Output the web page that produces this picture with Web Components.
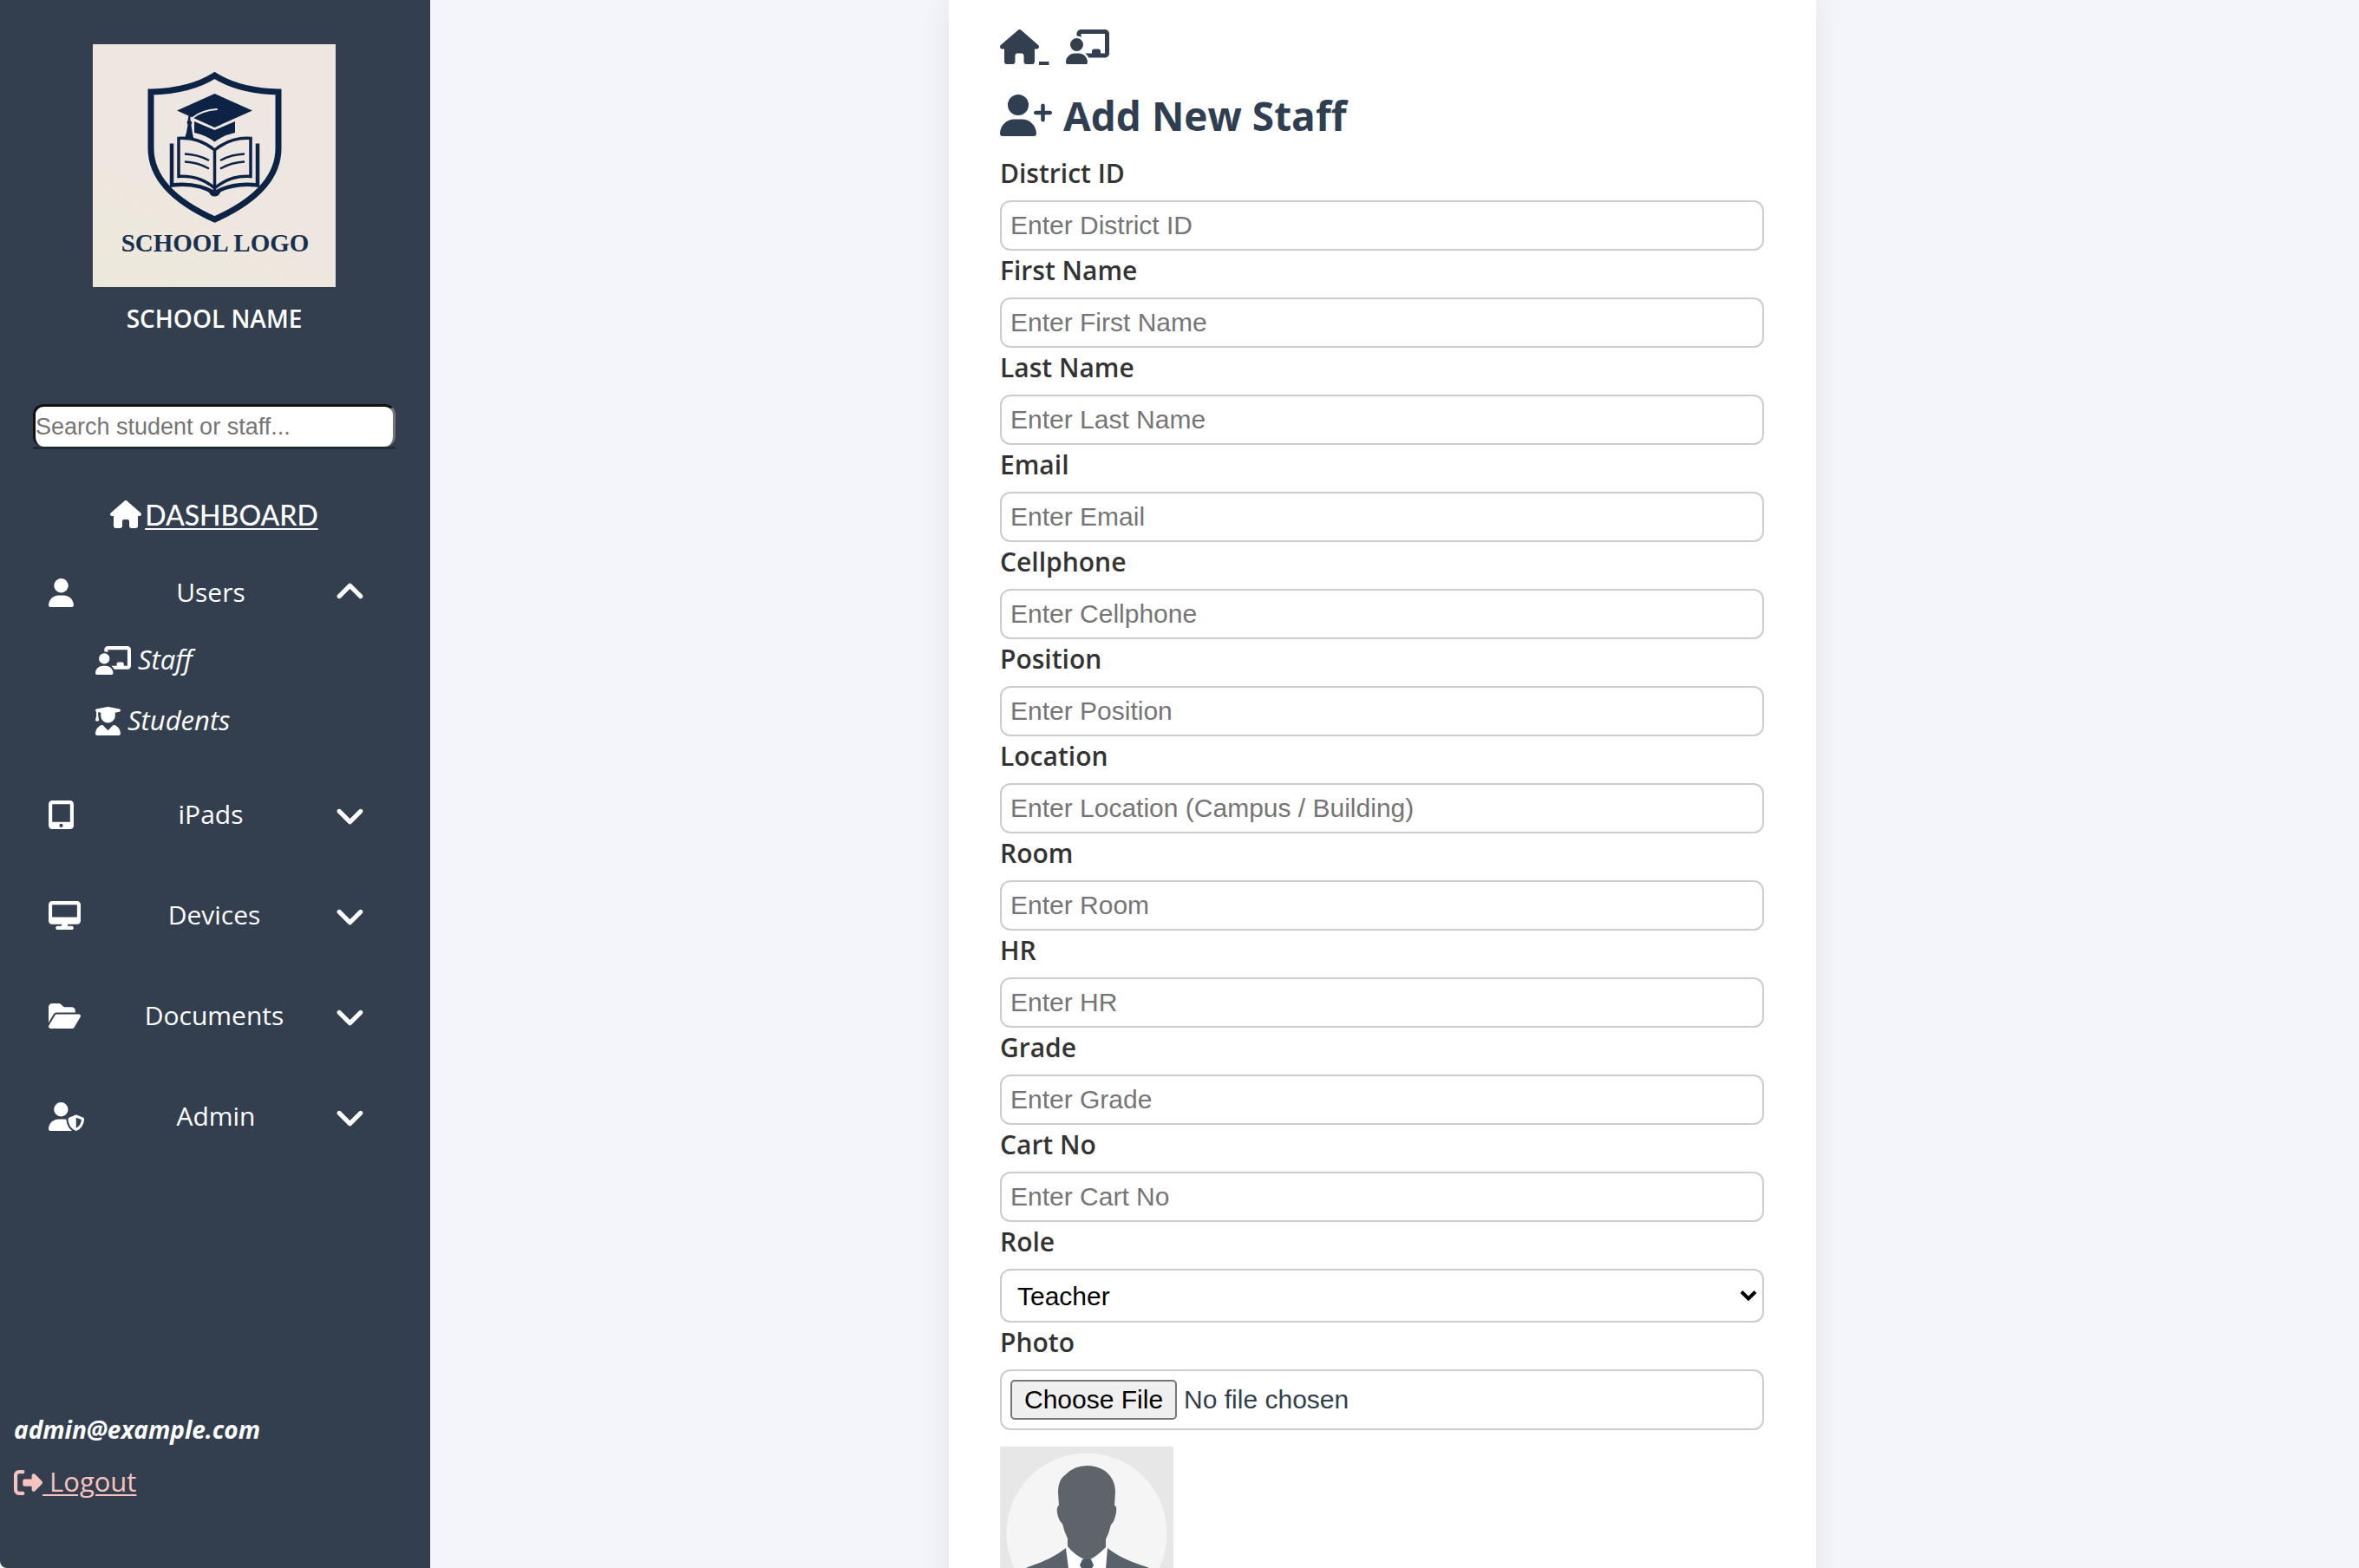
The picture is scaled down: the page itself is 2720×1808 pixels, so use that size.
<!DOCTYPE html>
<html lang="en">
<head>
<meta charset="utf-8">
<title>Add New Staff</title>
<style>
html, body { margin: 0; height: 100%; }
body { background: #f4f5fa; color: #2c3e50; font: 30px/1.4 "Open Sans", "Noto Sans", sans-serif; }
</style>
</head>
<body>
<app-shell>
  <side-bar slot="side">
    <school-brand slot="top" name="SCHOOL NAME"></school-brand>
    <staff-search slot="top"></staff-search>
    <dashboard-link slot="top">DASHBOARD</dashboard-link>
    <nav-group slot="nav" icon="user" label="Users" open>
      <nav-item icon="board">Staff</nav-item>
      <nav-item icon="graduate">Students</nav-item>
    </nav-group>
    <nav-group slot="nav" icon="tablet" label="iPads"></nav-group>
    <nav-group slot="nav" icon="desktop" label="Devices"></nav-group>
    <nav-group slot="nav" icon="folder" label="Documents"></nav-group>
    <nav-group slot="nav" icon="shield" label="Admin"></nav-group>
    <user-account slot="foot" email="admin@example.com"></user-account>
  </side-bar>
  <form-card>
    <bread-crumbs></bread-crumbs>
    <page-title>Add New Staff</page-title>
    <text-field label="District ID"></text-field>
    <text-field label="First Name"></text-field>
    <text-field label="Last Name"></text-field>
    <text-field label="Email" type="email"></text-field>
    <text-field label="Cellphone" type="tel"></text-field>
    <text-field label="Position"></text-field>
    <text-field label="Location" hint="Enter Location (Campus / Building)"></text-field>
    <text-field label="Room"></text-field>
    <text-field label="HR"></text-field>
    <text-field label="Grade"></text-field>
    <text-field label="Cart No"></text-field>
    <role-field label="Role"></role-field>
    <photo-field label="Photo"></photo-field>
  </form-card>
</app-shell>

<script>
const ICONS = {
  house: [576, "M575.8 255.5c0 18-15 32.1-32 32.1h-32l.7 160.2c0 2.7-.2 5.4-.5 8.1V472c0 22.1-17.9 40-40 40H456c-1.1 0-2.2 0-3.3-.1c-1.4 .1-2.8 .1-4.2 .1H416 392c-22.1 0-40-17.9-40-40V448 384c0-17.7-14.3-32-32-32H256c-17.7 0-32 14.3-32 32v64 24c0 22.1-17.9 40-40 40H160 128.1c-1.5 0-3-.1-4.5-.2c-1.2 .1-2.4 .2-3.6 .2H104c-22.1 0-40-17.9-40-40V360c0-.9 0-1.9 .1-2.8V287.6H32c-18 0-32-14-32-32.1c0-9 3-17 10-24L266.4 8c7-7 15-8 22-8s15 2 21 7L564.8 231.5c8 7 12 15 11 24z"],
  user: [448, "M224 256A128 128 0 1 0 224 0a128 128 0 1 0 0 256zm-45.7 48C79.8 304 0 383.8 0 482.3C0 498.7 13.3 512 29.7 512H418.3c16.4 0 29.7-13.3 29.7-29.7C448 383.8 368.2 304 269.7 304H178.3z"],
  board: [640, "M160 64c0-35.3 28.7-64 64-64H576c35.3 0 64 28.7 64 64V352c0 35.3-28.7 64-64 64H336.8c-11.8-25.5-29.9-47.5-52.4-64H384V320c0-17.7 14.3-32 32-32h64c17.7 0 32 14.3 32 32v32h64V64L224 64v49.1C205.2 102.2 183.3 96 160 96V64zm0 64a96 96 0 1 1 0 192 96 96 0 1 1 0-192zM133.3 352h53.3C260.3 352 320 411.7 320 485.3c0 14.7-11.9 26.7-26.7 26.7H26.7C11.9 512 0 500.1 0 485.3C0 411.7 59.7 352 133.3 352z"],
  plus: [640, "M96 128a128 128 0 1 1 256 0A128 128 0 1 1 96 128zM0 482.3C0 383.8 79.8 304 178.3 304h91.4C368.2 304 448 383.8 448 482.3c0 16.4-13.3 29.7-29.7 29.7H29.7C13.3 512 0 498.7 0 482.3zM504 312V248H440c-13.3 0-24-10.7-24-24s10.7-24 24-24h64V136c0-13.3 10.7-24 24-24s24 10.7 24 24v64h64c13.3 0 24 10.7 24 24s-10.7 24-24 24H552v64c0 13.3-10.7 24-24 24s-24-10.7-24-24z"],
  graduate: [448, "M219.3 .5c3.1-.6 6.3-.6 9.4 0l200 40C439.9 42.7 448 52.6 448 64s-8.1 21.3-19.3 23.5L352 102.9V160c0 70.7-57.3 128-128 128s-128-57.3-128-128V102.9L48 93.3v65.1l15.7 78.4c.9 4.7-.3 9.6-3.3 13.3s-7.6 5.9-12.4 5.9H16c-4.8 0-9.3-2.1-12.4-5.9s-4.3-8.6-3.3-13.3L16 158.4V86.6C6.5 83.3 0 74.3 0 64C0 52.6 8.1 42.7 19.3 40.5l200-40zM111.9 327.7c10.5-3.4 21.8 .4 29.4 8.5l71 75.5c6.3 6.7 17 6.7 23.3 0l71-75.5c7.6-8.1 18.9-11.9 29.4-8.5C401 348.6 448 409.4 448 481.3c0 17-13.8 30.7-30.7 30.7H30.7C13.8 512 0 498.2 0 481.3c0-71.9 47-132.7 111.9-153.6z"],
  tablet: [448, "M0 64C0 28.7 28.7 0 64 0H384c35.3 0 64 28.7 64 64V448c0 35.3-28.7 64-64 64H64c-35.3 0-64-28.7-64-64V64zM256 448a32 32 0 1 0 -64 0 32 32 0 1 0 64 0zM384 64H64V384H384V64z"],
  desktop: [576, "M64 0C28.7 0 0 28.7 0 64V352c0 35.3 28.7 64 64 64H240l-10.7 32H160c-17.7 0-32 14.3-32 32s14.3 32 32 32H416c17.7 0 32-14.3 32-32s-14.3-32-32-32H346.7L336 416H512c35.3 0 64-28.7 64-64V64c0-35.3-28.7-64-64-64H64zM512 64V288H64V64H512z"],
  folder: [576, "M88.7 223.8L0 375.8V96C0 60.7 28.7 32 64 32H181.5c17 0 33.3 6.7 45.3 18.7l26.5 26.5c12 12 28.3 18.7 45.3 18.7H416c35.3 0 64 28.7 64 64v32H144c-22.8 0-43.8 12.1-55.3 31.8zm27.6 16.1C122.1 230 132.6 224 144 224H544c11.5 0 22 6.1 27.7 16.1s5.7 22.2-.1 32.1l-112 192C453.9 474 443.4 480 432 480H32c-11.5 0-22-6.1-27.7-16.1s-5.7-22.2 .1-32.1l112-192z"],
  shield: [640, "M224 256A128 128 0 1 0 224 0a128 128 0 1 0 0 256zm-45.7 48C79.8 304 0 383.8 0 482.3C0 498.7 13.3 512 29.7 512H418.3c1.8 0 3.5-.2 5.3-.5c-76.3-55.1-99.8-141-103.1-200.2c-16.1-4.8-33.1-7.3-50.7-7.3H178.3zm308.8-78.3l-120 48C358 277.4 352 286.2 352 296c0 63.3 25.9 168.8 134.8 214.2c5.9 2.5 12.6 2.5 18.5 0C614.1 464.8 640 359.3 640 296c0-9.8-6-18.6-15.1-22.3l-120-48c-5.7-2.3-12.1-2.3-17.8 0zM591.4 312c-3.9 50.7-27.2 116.7-95.4 149.7V273.8L591.4 312z"],
  down: [512, "M233.4 406.6c12.5 12.5 32.8 12.5 45.3 0l192-192c12.5-12.5 12.5-32.8 0-45.3s-32.8-12.5-45.3 0L256 338.7 86.6 169.4c-12.5-12.5-32.8-12.5-45.3 0s-12.5 32.8 0 45.3l192 192z"],
  up: [512, "M233.4 105.4c12.5-12.5 32.8-12.5 45.3 0l192 192c12.5 12.5 12.5 32.8 0 45.3s-32.8 12.5-45.3 0L256 173.3 86.6 342.6c-12.5 12.5-32.8 12.5-45.3 0s-12.5-32.8 0-45.3l192-192z"],
  exit: [512, "M377.9 105.9L500.7 228.7c7.2 7.2 11.3 17.1 11.3 27.3s-4.1 20.1-11.3 27.3L377.9 406.1c-6.4 6.4-15 9.9-24 9.9c-18.7 0-33.9-15.2-33.9-33.9l0-62.1-128 0c-17.7 0-32-14.3-32-32l0-64c0-17.7 14.3-32 32-32l128 0 0-62.1c0-18.7 15.2-33.9 33.9-33.9c9 0 17.6 3.6 24 9.9zM160 96L96 96c-17.7 0-32 14.3-32 32l0 256c0 17.7 14.3 32 32 32l64 0c17.7 0 32 14.3 32 32s-14.3 32-32 32l-64 0c-53 0-96-43-96-96L0 128C0 75 43 32 96 32l64 0c17.7 0 32 14.3 32 32s-14.3 32-32 32z"]
};
const icon = (name, size = 33) => {
  const [w, d] = ICONS[name];
  return `<svg class="icon" aria-hidden="true" height="${size}" width="${Math.round(w / 512 * size)}" viewBox="0 0 ${w} 512" fill="currentColor"><path fill-rule="evenodd" d="${d}"/></svg>`;
};
const define = (tag, render) => customElements.define(tag, class extends HTMLElement {
  connectedCallback() {
    if (this.shadowRoot) return;
    this.attachShadow({ mode: "open" }).innerHTML =
      `<style>:host{display:block}*{box-sizing:border-box}.icon{flex:none}</style>` + render(this);
  }
});

define("app-shell", () => `
<style>
:host{display:flex;height:100vh;overflow:hidden}
main{flex:1;min-width:0;overflow-y:auto;scrollbar-width:none;padding-right:28px}
</style>
<slot name="side"></slot><main><slot></slot></main>`);

define("side-bar", () => `
<style>
:host{flex:none;width:496px;background:#333f4e;color:#fff;border-radius:0 0 0 8px}
aside{display:flex;flex-direction:column;height:100%}
.top,nav{display:flex;flex-direction:column;padding:0 40px 0 38px}
.top{padding-top:51px}
nav{margin-top:20px;gap:30px}
footer{margin-top:auto;padding:0 16px 78px}
</style>
<aside><div class="top"><slot name="top"></slot></div><nav><slot name="nav"></slot></nav><footer><slot name="foot"></slot></footer></aside>`);

define("school-brand", el => `
<style>
:host{text-align:center;font-weight:600;font-size:28px;line-height:40px}
svg{display:block;margin:0 auto 16px}
text{font:bold 29px "Liberation Serif",serif}
</style>
<svg width="280" height="280" viewBox="0 0 280 280" fill="none" stroke="#0c2345" role="img" aria-label="School logo">
<defs><linearGradient id="paper" x1=".8" y1="0" x2=".3" y2="1"><stop offset=".55" stop-color="#eee7e1"/><stop offset="1" stop-color="#ede8dc"/></linearGradient></defs>
<rect width="280" height="280" fill="url(#paper)" stroke="none"/>
<path stroke-width="7" d="M140.5 36Q112 54 67 55V120C67 156 96 182 140.5 202C185 182 214 156 214 120V55Q169 54 140.5 36z"/>
<g fill="#0c2345" stroke="none">
<path d="M97 76.5L140.5 57L184 76.5L140.5 96z"/>
<path d="M117 89L140.5 99L164 89V102Q150 105 140.5 112.5Q131 105 117 102z"/>
<path d="M110.5 82h2v6l2 2l-1 3q1 9 3 17h-11q3-8 4-17l-1-3l1-2z"/>
<path d="M132 168h17l-4 6q-4.5 3-9 0z"/></g>
<path stroke="#eee7e1" stroke-width="2" stroke-linecap="round" d="M115 85Q126 76 143 75"/>
<path stroke-width="3.5" d="M140.5 122Q122 107 99 108.5V152.5Q123 151 140.5 166Q158 151 182 152.5V108.5Q159 107 140.5 122V168"/>
<path stroke-width="4.5" d="M91 114.5V162.5Q120 159 140.5 171.5Q161 159 190 162.5V114.5"/>
<path stroke-width="2.3" d="M106 126.5Q121 127 134 134M106 135.5Q121 136 134 143.5M175 126.5Q160 127 147 134M175 135.5Q160 136 147 143.5"/>
<text x="141" y="239" text-anchor="middle" fill="#17304f" stroke="none">SCHOOL LOGO</text>
</svg>${el.getAttribute("name")}`);

define("staff-search", () => `
<style>
:host{margin-top:79px;border-bottom:3px solid #1d2b36}
input{display:block;width:100%;height:49px;padding:0;background:#fff;border:3px solid;border-color:#111 #767676 #fff #111;border-bottom-width:0;border-radius:12px;font:27px "Liberation Sans",sans-serif}
input::placeholder{color:#757575;opacity:1}
</style>
<input type="search" aria-label="Search student or staff" placeholder="Search student or staff...">`);

define("dashboard-link", () => `
<style>
:host{margin-top:50px;height:52px;text-align:center;font:500 32px/52px Lato,sans-serif}
a{color:inherit;text-decoration:underline;text-decoration-thickness:2px;text-underline-offset:3px;text-decoration-skip-ink:none}
.icon{margin-right:4px;vertical-align:-3px}
</style>
<a href="#dashboard">${icon("house", 32)}<slot></slot></a>`);

define("nav-group", el => `
<style>
button{display:flex;align-items:center;justify-content:space-between;width:100%;height:86px;padding:0 36px 0 18px;border:0;background:none;color:inherit;font:inherit;cursor:pointer}
.icon:first-child{margin-right:14px}
.icon:last-child{stroke:currentColor;stroke-width:16}
</style>
<button type="button" aria-expanded="${el.hasAttribute("open")}">${icon(el.getAttribute("icon"))}<span>${el.getAttribute("label")}</span>${icon(el.hasAttribute("open") ? "up" : "down")}</button>
<slot></slot>`);

define("nav-item", el => `
<style>
a{display:flex;align-items:center;gap:8px;height:70px;padding-left:72px;color:inherit;text-decoration:none;font-size:31px;font-style:italic}
</style>
<a href="#">${icon(el.getAttribute("icon"))}<span><slot></slot></span></a>`);

define("user-account", el => `
<style>
:host{font-size:28px;line-height:36px}
strong{display:block;font-style:italic;margin-bottom:20px}
a{display:block;color:#f6c3be;font-size:31px;line-height:44px;text-decoration:underline;text-decoration-thickness:2px;text-underline-offset:3px;white-space:pre}
.icon{vertical-align:-6px}
</style>
<strong>${el.getAttribute("email")}</strong>
<a href="#logout">${icon("exit")} Logout</a>`);

define("form-card", () => `
<style>
:host{width:1000px;max-width:100%;margin:0 auto;background:#fff;box-shadow:0 0 32px rgba(40,40,80,.08)}
form{padding:34px 60px 60px 59px}
</style>
<form><slot></slot></form>`);

define("bread-crumbs", () => `
<style>
div{display:flex;gap:20px;height:40px;font-size:44px;line-height:40px}
a{display:flex;color:#333f4e;text-decoration:none}
u{white-space:pre;text-decoration-thickness:4px;text-underline-offset:0}
</style>
<div><a href="#home" aria-label="Home">${icon("house", 40)}<u> </u></a><a href="#staff" aria-label="Staff">${icon("board", 40)}</a></div>`);

define("page-title", () => `
<style>
h1{display:flex;align-items:center;gap:13px;margin:26px 0 11px;font-size:46px;line-height:66px;font-weight:700;color:#2f3e50}
</style>
<h1>${icon("plus", 48)}<span><slot></slot></span></h1>`);

const FIELD = `<style>
label{display:block;margin-bottom:8px;font-weight:600;font-size:30px;line-height:46px;color:#333}
input,select{display:block;width:100%;margin:0;border:2px solid #ccc;border-radius:12px;background:#fff;font:30px "Liberation Sans",sans-serif}
</style>`;

define("text-field", el => `${FIELD}
<style>
input{height:58px;padding:0 10px}
input::placeholder{color:#757575;opacity:1}
</style>
<label for="field">${el.getAttribute("label")}</label>
<input id="field" type="${el.getAttribute("type") || "text"}" placeholder="${el.getAttribute("hint") || "Enter " + el.getAttribute("label")}">`);

define("role-field", el => `${FIELD}
<style>
div{display:grid;align-items:center}
select,svg{grid-area:1/1}
select{height:62px;padding:0 40px 0 18px;appearance:none;color:#000}
svg{justify-self:end;margin-right:8px;pointer-events:none}
</style>
<label for="field">${el.getAttribute("label")}</label>
<div><select id="field"><option>Teacher</option><option>Admin</option></select>
<svg width="20" height="14" viewBox="0 0 20 14" fill="none" stroke="#000" stroke-width="4" aria-hidden="true"><path d="M2 2.5L10 10.5L18 2.5"/></svg></div>`);

define("photo-field", el => `${FIELD}
<style>
input{height:70px;padding:10px;color:#333f4e}
input::file-selector-button{height:46px;margin:0 8px 0 0;padding:0 14px;border:2px solid #767676;border-radius:5px;background:#efefef;color:#000;font:inherit}
.avatar{display:block;margin-top:19px}
</style>
<label for="field">${el.getAttribute("label")}</label>
<input id="field" type="file" accept="image/*">
<svg class="avatar" width="200" height="200" viewBox="0 0 200 200" role="img" aria-label="Photo preview">
<defs><clipPath id="disc"><circle cx="100" cy="100" r="92.5"/></clipPath></defs>
<rect width="200" height="200" fill="#e7e7e7"/><circle cx="100" cy="100" r="92.5" fill="#f5f5f5"/>
<g clip-path="url(#disc)">
<path fill="#fff" d="M77 116L60 200H140L124 116L100 131z"/>
<path fill="#59616a" d="M76 117L79 141L92 200H10Q8 152 32 139Q60 130 76 117zM124 117L122 141L108 200H190Q192 152 170 139Q140 130 124 117z"/>
<path fill="#4d5763" d="M95 130H105L108 137L105 142L110 190L100 200L90 190L95 142L92 137z"/></g>
<path fill="#5f646a" d="M100 22C120 22 133 35 133 52L132 68Q135 68 134 76Q132 87 128 90Q126 99 122 107V116Q112 126 104 130H97Q86 125 78 115V106Q74 98 72 89Q68 86 66 77Q65 69 68 68L67 52Q67 38 76 32Q86 22 100 22z"/>
</svg>`);
</script>
</body>
</html>
